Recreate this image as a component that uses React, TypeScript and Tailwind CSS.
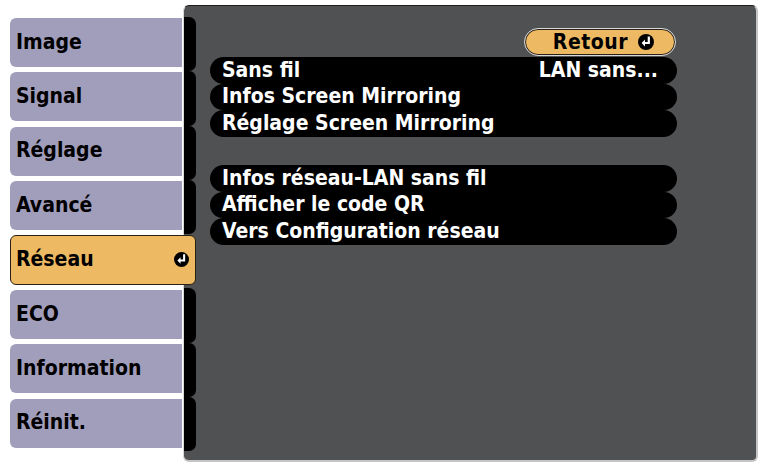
import React from "react";

const font = { fontFamily: '"DejaVu Sans Condensed", "DejaVu Sans", "Liberation Sans", sans-serif' };

function EnterIcon({ size = 15 }: { size?: number }) {
  return (
    <svg width={size} height={size} viewBox="0 0 16 16">
      <circle cx="8" cy="8" r="8" fill="#000" />
      <path d="M10.8 3.6 V9 H6" stroke="#fff" strokeWidth="2.2" fill="none" strokeLinecap="square" />
      <path d="M7 5.6 L3.6 9 L7 12.4 Z" fill="#fff" />
    </svg>
  );
}

const tabs = ["Image", "Signal", "Réglage", "Avancé", "Réseau", "ECO", "Information", "Réinit."];
const selected = 4;

function Row({ label, value }: { label: string; value?: string }) {
  return (
    <div className="h-[26.67px] bg-black rounded-full flex items-center justify-between pl-[12px] pr-[19px] text-white text-[21px] font-bold leading-none whitespace-nowrap">
      <span>{label}</span>
      {value && <span>{value}</span>}
    </div>
  );
}

export default function App() {
  return (
    <div className="w-[762px] h-[464px] bg-white flex pt-[5px] font-stretch-condensed" style={font}>
      {/* Left tabs */}
      <div className="w-[183px] pl-[10px] pt-[13px] flex flex-col gap-[5.3px] shrink-0">
        {tabs.map((t, i) =>
          i === selected ? (
            <div
              key={t}
              className="relative z-10 w-[186px] h-[50px] -mt-[0.5px] bg-[#edb962] border border-[#2a2116] rounded-[6px] flex items-center justify-between pl-[5px] pr-[6px] text-[21px] font-bold text-black"
            >
              <span>{t}</span>
              <EnterIcon size={15} />
            </div>
          ) : (
            <div
              key={t}
              className="w-[172px] h-[49px] bg-[#a19ebc] rounded-l-[6px] flex items-center pl-[6px] text-[21px] font-bold text-black"
            >
              {t}
            </div>
          )
        )}
      </div>

      {/* Panel */}
      <div className="w-[575px] h-[457px] bg-[#505152] rounded-[6px] border-t border-l border-t-[#1e1e1e] border-l-[#d8d8d8] border-r-2 border-b-2 border-r-[#c4c4c4] border-b-[#c4c4c4] flex">
        <div className="w-[12px] pt-[11px] flex flex-col shrink-0">
          {tabs.map((t, i) => (
            <div
              key={t}
              className={
                i === selected
                  ? "h-[54.3px] bg-transparent"
                  : "h-[54.3px] bg-black rounded-r-[7px]"
              }
            />
          ))}
        </div>
        <div className="w-[481px] pl-[14px] pt-[23px] flex flex-col">
          <div className="self-end mr-[2px] w-[150px] h-[26px] bg-[#edba63] border border-[#2a2116] rounded-full flex items-center justify-end pr-[20px] gap-[10px] text-black text-[21px] font-bold leading-none outline outline-1 outline-[#d9d9d9]">
            <span className="tracking-[0.5px]">Retour</span>
            <EnterIcon size={16} />
          </div>
          <div className="mt-[2px] flex flex-col">
            <Row label="Sans fil" value="LAN sans..." />
            <Row label="Infos Screen Mirroring" />
            <Row label="Réglage Screen Mirroring" />
          </div>
          <div className="mt-[28px] flex flex-col">
            <Row label="Infos réseau-LAN sans fil" />
            <Row label="Afficher le code QR" />
            <Row label="Vers Configuration réseau" />
          </div>
        </div>
      </div>
    </div>
  );
}
